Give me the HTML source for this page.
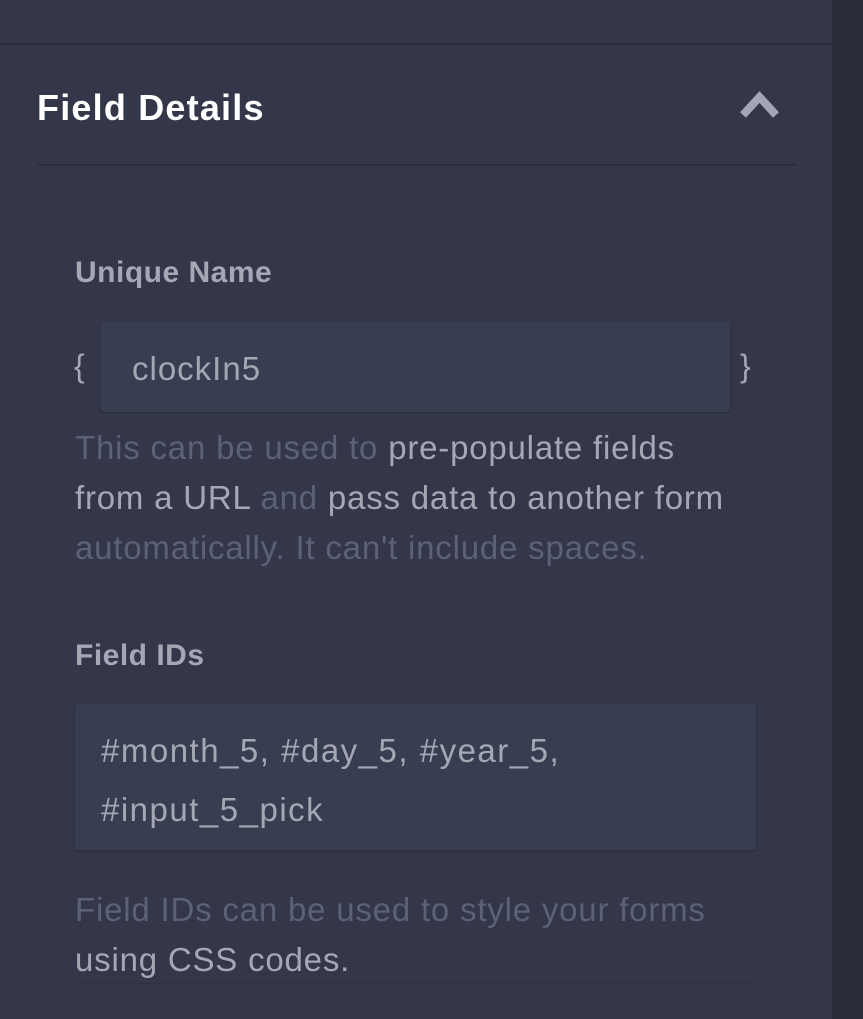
<!DOCTYPE html>
<html><head><style>
html,body{margin:0;padding:0;}
body{width:863px;height:1019px;background:#333749;position:relative;overflow:hidden;font-family:"Liberation Sans",sans-serif;}
.strip{position:absolute;left:832px;top:0;width:31px;height:1019px;background:#2b2d3b;}
.topline{position:absolute;left:0;top:43px;width:832px;height:2px;background:#2b2e3c;}
h1{position:absolute;left:37px;top:87px;margin:0;font-size:36px;line-height:42px;font-weight:bold;color:#fff;letter-spacing:1.2px;}
.hline{position:absolute;left:37px;top:164px;width:759px;height:2px;background:#2b2e3c;}
.lbl{position:absolute;left:75px;margin:0;font-size:30px;line-height:34px;font-weight:bold;color:#a4a7b4;letter-spacing:0.5px;}
.inp{position:absolute;background:#393d51;border-radius:3px;box-shadow:0 1px 2px rgba(0,0,0,0.25);}
.txt{position:absolute;left:75px;font-size:33px;line-height:50px;color:#5d6177;white-space:nowrap;letter-spacing:0.8px;}
.b{color:#a4a7b4;}
.br{position:absolute;font-size:32px;color:#a4a7b4;top:348px;}
</style></head><body>
<div class="topline"></div>
<div class="strip"></div>
<h1>Field Details</h1>
<svg style="position:absolute;left:739px;top:89px" width="41" height="30" viewBox="0 0 41 30"><path d="M4 26 L20.5 8 L37 26" fill="none" stroke="#a2a6b6" stroke-width="8"/></svg>
<div class="hline"></div>
<div class="lbl" style="top:256px">Unique Name</div>
<div class="br" style="left:74px">{</div>
<div class="inp" style="left:101px;top:322px;width:629px;height:90px"></div>
<div style="position:absolute;left:132px;top:350px;font-size:33px;line-height:38px;color:#a4a7b4;letter-spacing:1px">clockIn5</div>
<div class="br" style="left:740px">}</div>
<div class="txt" style="top:423px">This can be used to <span class="b">pre-populate fields</span><br><span class="b">from a URL</span> and <span class="b">pass data to another form</span><br>automatically. It can't include spaces.</div>
<div class="lbl" style="top:639px">Field IDs</div>
<div class="inp" style="left:75px;top:704px;width:681px;height:146px"></div>
<div class="txt b" style="left:101px;top:721px;line-height:59px;letter-spacing:1.5px">#month_5, #day_5, #year_5,<br>#input_5_pick</div>
<div class="txt" style="top:885px">Field IDs can be used to style your forms<br><span class="b">using CSS codes.</span></div>
<div style="position:absolute;left:75px;top:983px;width:682px;height:1px;background:#2e3242"></div>
</body></html>
